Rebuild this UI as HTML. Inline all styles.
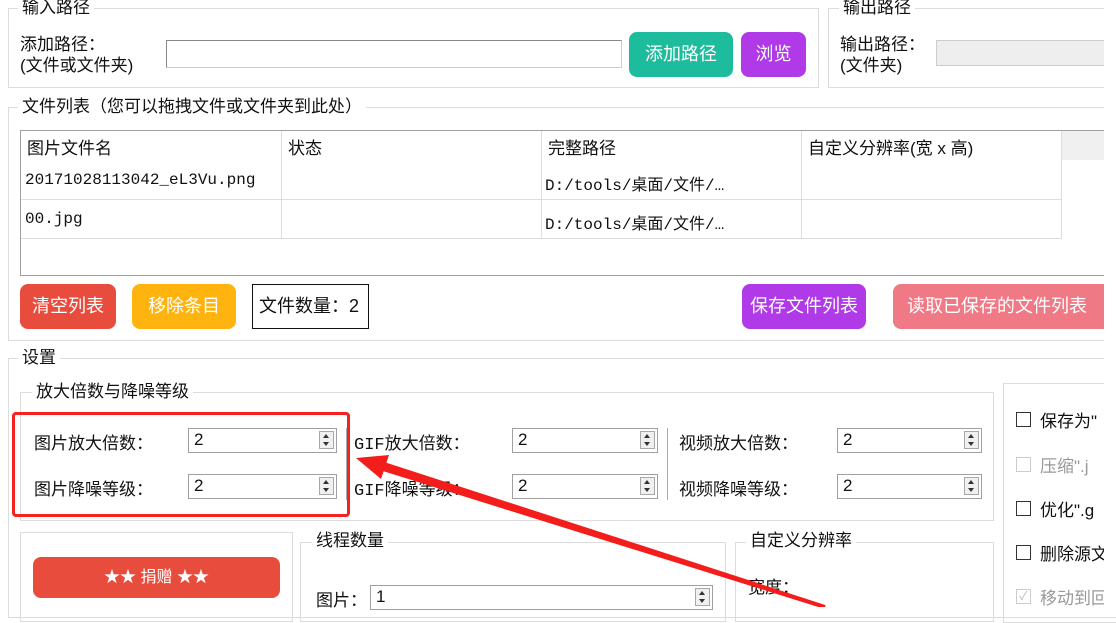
<!DOCTYPE html>
<html><head><meta charset="utf-8"><style>
*{box-sizing:border-box;margin:0;padding:0}
body{width:1116px;height:607px;overflow:hidden;background:#fff;position:relative;font-family:"Liberation Sans","Noto Sans CJK SC",sans-serif;font-size:17px;color:#111}
.a{position:absolute;white-space:nowrap}
.g{position:absolute;border:1px solid #dcdcdc}
.lg{position:absolute;background:#fff;padding:0 4px;line-height:20px}
.btn{position:absolute;border-radius:8px;color:#fff;text-align:center;font-size:18px}
.in{position:absolute;border:1px solid #8a8a8a;background:#fff;border-right-color:#ccc;border-bottom-color:#ccc}
.sp{position:absolute;border:1px solid #a0a0a0;background:#fff;font-size:17px;padding-left:5px;line-height:22px}
.sp i{position:absolute;right:2px;top:2px;width:15px;height:18px;border:1px solid #a8a8a8;background:#f0f0f0}
.sp i:before{content:"";position:absolute;left:3px;top:2px;border:3px solid transparent;border-bottom:4px solid #333;border-top:none}
.sp i:after{content:"";position:absolute;left:3px;top:10px;border:3px solid transparent;border-top:4px solid #333;border-bottom:none}
.cb{position:absolute;width:15px;height:15px;border:1px solid #333;background:#fff}
.mono{font-family:"Liberation Mono","Noto Sans CJK SC",monospace}
</style></head><body>
<div class="g" style="left:8px;top:8px;width:811px;height:80px"></div>
<div class="lg" style="left:18px;top:-2px">输入路径</div>
<div class="a" style="left:20px;top:34px;line-height:21px">添加路径：<br>(文件或文件夹)</div>
<div class="in" style="left:166px;top:40px;width:456px;height:28px"></div>
<div class="btn" style="left:629px;top:32px;width:104px;height:45px;line-height:45px;background:#1dbc9c">添加路径</div>
<div class="btn" style="left:741px;top:32px;width:65px;height:45px;line-height:45px;background:#b039e8">浏览</div>
<div class="g" style="left:828px;top:8px;width:300px;height:80px"></div>
<div class="lg" style="left:839px;top:-2px">输出路径</div>
<div class="a" style="left:840px;top:34px;line-height:21px">输出路径：<br>(文件夹)</div>
<div class="a" style="left:936px;top:40px;width:200px;height:26px;border:1px solid #ccc;background:#eee"></div>
<div class="g" style="left:8px;top:107px;width:1120px;height:234px"></div>
<div class="lg" style="left:18px;top:97px">文件列表（您可以拖拽文件或文件夹到此处）</div>
<div class="a" style="left:20px;top:130px;width:1100px;height:146px;border:1px solid #a0a0a0;background:#fff"></div>
<div class="a" style="left:1062px;top:131px;width:60px;height:29px;background:#f0f0f0"></div>
<div class="a" style="left:281px;top:131px;width:1px;height:107px;background:#ddd"></div>
<div class="a" style="left:541px;top:131px;width:1px;height:107px;background:#ddd"></div>
<div class="a" style="left:801px;top:131px;width:1px;height:107px;background:#ddd"></div>
<div class="a" style="left:1061px;top:131px;width:1px;height:107px;background:#ddd"></div>
<div class="a" style="left:21px;top:199px;width:1041px;height:1px;background:#ddd"></div>
<div class="a" style="left:21px;top:238px;width:1041px;height:1px;background:#ddd"></div>
<div class="a" style="left:27px;top:134px">图片文件名</div>
<div class="a" style="left:288px;top:134px">状态</div>
<div class="a" style="left:548px;top:134px">完整路径</div>
<div class="a" style="left:808px;top:134px">自定义分辨率(宽 x 高)</div>
<div class="a mono" style="left:25px;top:171px;font-size:16px">20171028113042_eL3Vu.png</div>
<div class="a mono" style="left:545px;top:171px;font-size:16px">D:/tools/桌面/文件/…</div>
<div class="a mono" style="left:25px;top:210px;font-size:16px">00.jpg</div>
<div class="a mono" style="left:545px;top:210px;font-size:16px">D:/tools/桌面/文件/…</div>
<div class="btn" style="left:20px;top:284px;width:96px;height:45px;line-height:45px;background:#e84c3d">清空列表</div>
<div class="btn" style="left:132px;top:284px;width:104px;height:45px;line-height:45px;background:#feb30f">移除条目</div>
<div class="a" style="left:252px;top:284px;width:117px;height:45px;border:1.5px solid #111;line-height:42px;padding-left:6px;font-size:18px">文件数量：2</div>
<div class="btn" style="left:742px;top:284px;width:124px;height:45px;line-height:45px;background:#b039e8">保存文件列表</div>
<div class="btn" style="left:893px;top:284px;width:230px;height:45px;line-height:45px;background:#ef7a85;text-align:left;padding-left:14px">读取已保存的文件列表</div>
<div class="g" style="left:8px;top:358px;width:1120px;height:260px"></div>
<div class="lg" style="left:18px;top:348px">设置</div>
<div class="g" style="left:20px;top:392px;width:974px;height:129px"></div>
<div class="lg" style="left:32px;top:382px">放大倍数与降噪等级</div>
<div class="a" style="left:12px;top:412px;width:338px;height:105px;border:3px solid #f52220;border-radius:4px"></div>
<div class="a" style="left:34px;top:429px">图片放大倍数：</div>
<div class="a" style="left:34px;top:475px">图片降噪等级：</div>
<div class="sp" style="left:188px;top:428px;width:149px;height:25px">2<i></i></div>
<div class="sp" style="left:188px;top:474px;width:149px;height:25px">2<i></i></div>
<div class="a" style="left:346px;top:428px;width:1px;height:72px;background:#aaa"></div>
<div class="a mono" style="left:354px;top:429px">GIF放大倍数：</div>
<div class="a mono" style="left:354px;top:475px">GIF降噪等级：</div>
<div class="sp" style="left:512px;top:428px;width:146px;height:25px">2<i></i></div>
<div class="sp" style="left:512px;top:474px;width:146px;height:25px">2<i></i></div>
<div class="a" style="left:667px;top:428px;width:1px;height:72px;background:#aaa"></div>
<div class="a" style="left:679px;top:429px">视频放大倍数：</div>
<div class="a" style="left:679px;top:475px">视频降噪等级：</div>
<div class="sp" style="left:837px;top:428px;width:145px;height:25px">2<i></i></div>
<div class="sp" style="left:837px;top:474px;width:145px;height:25px">2<i></i></div>
<div class="g" style="left:1003px;top:383px;width:130px;height:240px"></div>
<div class="cb" style="left:1016px;top:412px"></div><div class="a" style="left:1040px;top:407px">保存为"</div>
<div class="cb" style="left:1016px;top:457px;border-color:#ccc"></div><div class="a" style="left:1040px;top:452px;color:#999">压缩".j</div>
<div class="cb" style="left:1016px;top:501px"></div><div class="a" style="left:1040px;top:496px">优化".g</div>
<div class="cb" style="left:1016px;top:545px"></div><div class="a" style="left:1040px;top:540px">删除源文</div>
<div class="cb" style="left:1016px;top:589px;border-color:#ccc;color:#bbb;font-size:12px;line-height:13px;text-align:center">✓</div><div class="a" style="left:1040px;top:584px;color:#999">移动到回</div>
<div class="g" style="left:20px;top:532px;width:273px;height:90px"></div>
<div class="btn" style="left:33px;top:557px;width:247px;height:41px;line-height:41px;background:#e84c3d;font-size:16px">★★ 捐赠 ★★</div>
<div class="g" style="left:300px;top:542px;width:426px;height:80px"></div>
<div class="lg" style="left:312px;top:531px">线程数量</div>
<div class="a" style="left:316px;top:586px">图片：</div>
<div class="sp" style="left:370px;top:585px;width:343px;height:25px">1<i></i></div>
<div class="g" style="left:735px;top:542px;width:259px;height:80px"></div>
<div class="lg" style="left:746px;top:531px">自定义分辨率</div>
<div class="a" style="left:748px;top:573px">宽度：</div>
<div class="a" style="left:1104px;top:0;width:12px;height:607px;background:#fff"></div>
<svg class="a" style="left:0;top:0" width="1116" height="607"><polygon points="356,458 389,455 386.4,462.7 825.6,605.1 824.4,608.9 383.6,471.3 381,479" fill="#f31d1b"/></svg>
</body></html>
